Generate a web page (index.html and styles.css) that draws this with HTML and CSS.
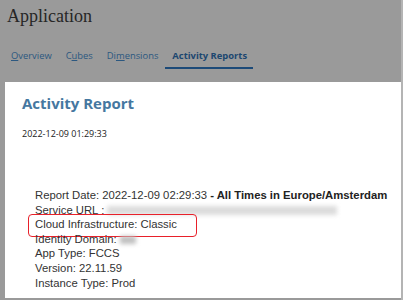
FILE: index.html
```html
<!DOCTYPE html>
<html lang="en">
<head>
    <meta charset="UTF-8">
    <title>Application</title>
    <link rel="stylesheet" href="styles.css">
</head>
<body>
    <div class="header">
        <h1 class="app-title">Application</h1>
        <nav class="tabs">
            <a class="tab"><u>O</u>verview</a>
            <a class="tab">C<u>u</u>bes</a>
            <a class="tab">Di<u>m</u>ensions</a>
            <a class="tab active">Activity Reports</a>
        </nav>
    </div>

    <div class="panel">
        <h2 class="report-title">Activity Report</h2>
        <div class="stamp">2022-12-09 01:29:33</div>

        <div class="details">
            <div class="line">Report Date: 2022-12-09 02:29:33 <b>- All Times in Europe/Amsterdam</b></div>
            <div class="line">Service URL : <span class="blur wide"></span></div>
            <div class="line boxed">Cloud Infrastructure: Classic</div>
            <div class="line">Identity Domain: <span class="blur small"></span></div>
            <div class="line">App Type: FCCS</div>
            <div class="line">Version: 22.11.59</div>
            <div class="line">Instance Type: Prod</div>
        </div>
    </div>
</body>
</html>
```

FILE: styles.css
```css
* {
    margin: 0;
    padding: 0;
    box-sizing: border-box;
}

body {
    background: #9a9a9a;
    width: 403px;
    height: 300px;
    overflow: hidden;
    border-right: 2px solid #b4b4b4;
}

.header {
    height: 82px;
    padding: 6px 0 0 7px;
}

.app-title {
    font-family: "Liberation Serif", serif;
    font-weight: normal;
    font-size: 18px;
    color: #262626;
    line-height: 20px;
}

.tabs {
    display: flex;
    gap: 14px;
    margin-top: 23px;
    padding-left: 4px;
}

.tab {
    font-family: "Open Sans", sans-serif;
    font-size: 9.4px;
    color: #2c5880;
    line-height: 14px;
    padding-bottom: 4px;
}

.tab u {
    text-decoration-thickness: 1px;
}

.tab.active {
    font-weight: bold;
    color: #1c4770;
    border-bottom: 2px solid #1c4a78;
    margin-left: -7px;
    padding: 0 6px 4px 7px;
}

.panel {
    background: #fff;
    margin-left: 5px;
    height: 216px;
    padding: 11px 0 0 17px;
}

.report-title {
    font-family: "Open Sans", sans-serif;
    font-size: 15px;
    font-weight: bold;
    color: #4577a0;
    line-height: 20px;
}

.stamp {
    font-family: "Open Sans", sans-serif;
    font-size: 9px;
    color: #222;
    margin-top: 14px;
}

.details {
    margin-top: 48px;
    padding-left: 13px;
    font-family: "Liberation Sans", sans-serif;
    font-size: 11.3px;
    color: #333;
    white-space: nowrap;
}

.line {
    line-height: 14.6px;
    position: relative;
}

.line b {
    color: #222;
}

.boxed::after {
    content: "";
    position: absolute;
    left: -7px;
    top: -3px;
    width: 167px;
    height: 21px;
    border: 1.5px solid #e8202a;
    border-radius: 4px;
}

.blur {
    display: inline-block;
    vertical-align: middle;
    background: #dcdcdc;
    filter: blur(2px);
}

.blur.wide {
    width: 230px;
    height: 9px;
}

.blur.small {
    width: 16px;
    height: 8px;
    background: #c0c0c0;
}
```
